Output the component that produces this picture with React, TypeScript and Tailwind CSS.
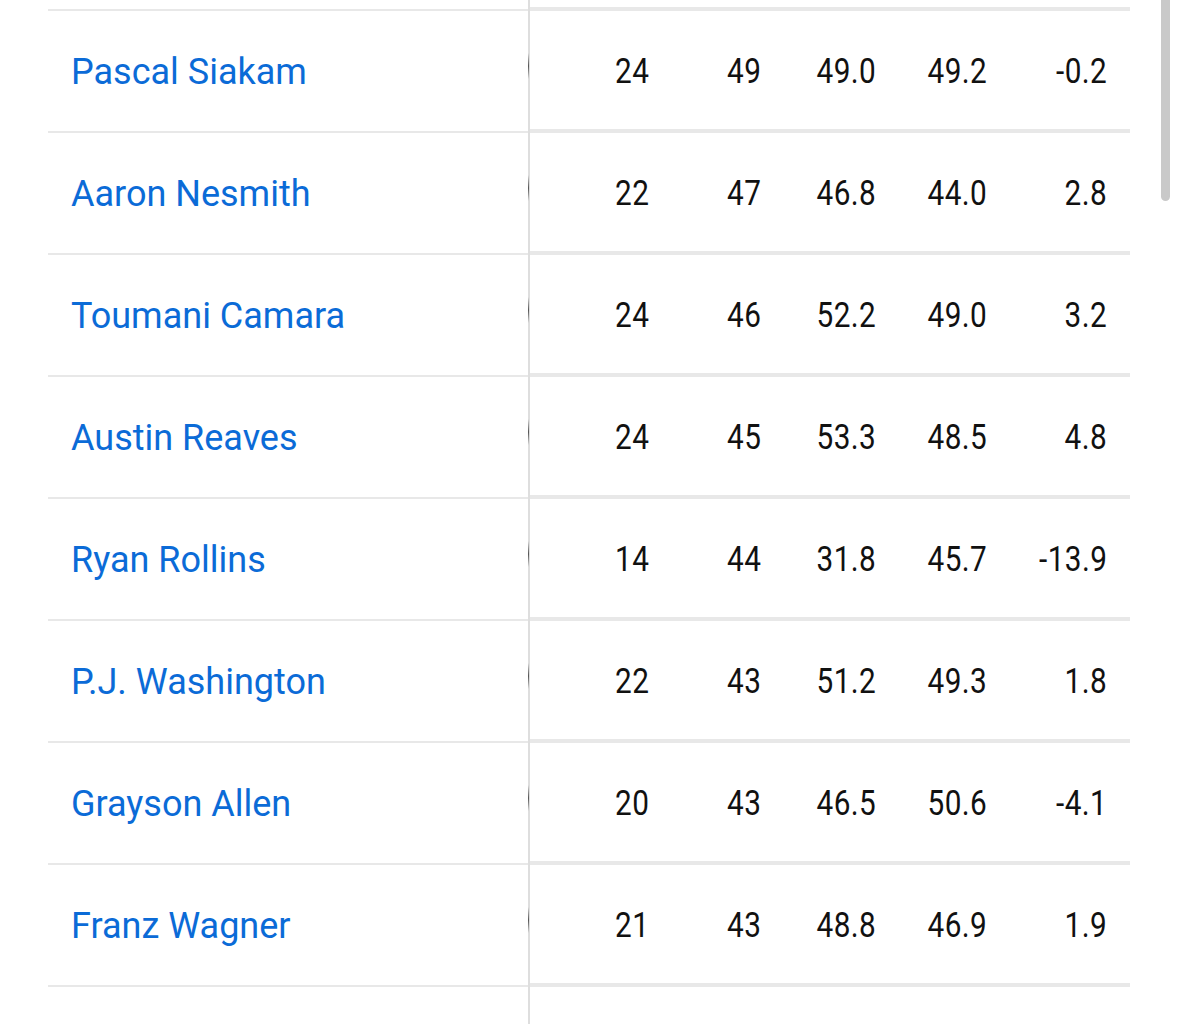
import React from 'react';

const rows = [
  { name: 'Pascal Siakam', vals: ['24', '49', '49.0', '49.2', '-0.2'] },
  { name: 'Aaron Nesmith', vals: ['22', '47', '46.8', '44.0', '2.8'] },
  { name: 'Toumani Camara', vals: ['24', '46', '52.2', '49.0', '3.2'] },
  { name: 'Austin Reaves', vals: ['24', '45', '53.3', '48.5', '4.8'] },
  { name: 'Ryan Rollins', vals: ['14', '44', '31.8', '45.7', '-13.9'] },
  { name: 'P.J. Washington', vals: ['22', '43', '51.2', '49.3', '1.8'] },
  { name: 'Grayson Allen', vals: ['20', '43', '46.5', '50.6', '-4.1'] },
  { name: 'Franz Wagner', vals: ['21', '43', '48.8', '46.9', '1.9'] },
];

const colWidths = ['w-[119px]', 'w-[112px]', 'w-[115px]', 'w-[111px]', 'w-[120px]'];

function Divider({ mark }: { mark?: boolean }) {
  return (
    <div className="relative w-[2px] bg-[#dedede] shrink-0">
      {mark && <div className="absolute left-0 top-[42px] h-[26px] w-[1px] bg-gradient-to-b from-[#dedede] via-[#555] to-[#dedede]" />}
    </div>
  );
}

function Row({ name, vals }: { name?: string; vals?: string[] }) {
  return (
    <div className="flex h-[122px]">
      <div className="w-[480px] flex items-center pl-[23px] pt-[2px] border-b-2 border-[#e8e8e8]">
        {name && (
          <span className="text-[36px] text-[#0b6bd7]" style={{ fontFamily: 'Roboto, sans-serif' }}>
            {name}
          </span>
        )}
      </div>
      <Divider mark={!!name} />
      <div className="flex-1 flex items-center pt-[2px] border-b-4 border-[#e8e8e8]">
        {vals?.map((v, i) => (
          <div key={i} className={`${colWidths[i]} flex justify-end`}>
            <span
              className="inline-block text-[35px] text-[#111] scale-x-[0.85] origin-right leading-none tracking-[0.5px]"
              style={{ fontFamily: 'Roboto, sans-serif' }}
            >
              {v}
            </span>
          </div>
        ))}
      </div>
    </div>
  );
}

export default function App() {
  return (
    <div className="relative w-[1179px] h-[1024px] overflow-hidden bg-white">
      <div className="ml-[48px] w-[1082px] flex flex-col">
        {/* tail of the row above */}
        <div className="flex h-[11px]">
          <div className="w-[480px] border-b-2 border-[#e8e8e8]" />
          <Divider />
          <div className="flex-1 border-b-4 border-[#e8e8e8]" />
        </div>
        {rows.map((r) => (
          <Row key={r.name} name={r.name} vals={r.vals} />
        ))}
        <Row />
      </div>
      {/* scrollbar */}
      <div className="absolute left-[1161px] top-0 w-[9px] h-[201px] rounded-b-full bg-[#c9c9c9]" />
    </div>
  );
}
